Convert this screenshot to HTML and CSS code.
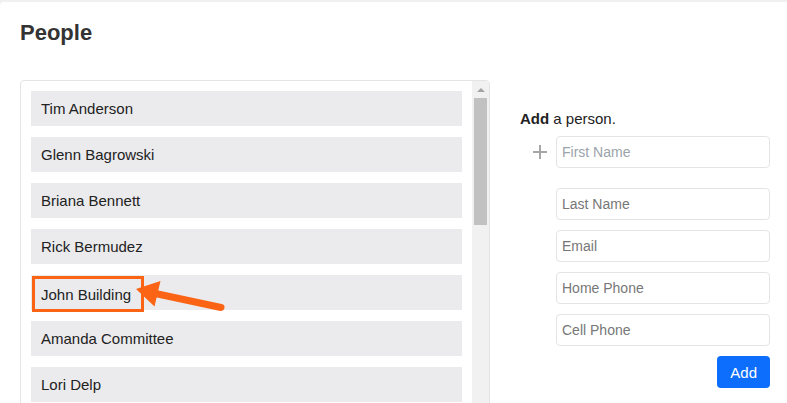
FILE: index.html
```html
<!DOCTYPE html>
<html lang="en">
<head>
    <meta charset="UTF-8">
    <meta name="viewport" content="width=device-width, initial-scale=1.0">
    <title>People</title>
    <link rel="stylesheet" href="styles.css">
</head>
<body>

<div class="page">
    <h1>People</h1>

    <div class="layout">
        <div class="panel">
            <ul class="people">
                <li class="person">Tim Anderson</li>
                <li class="person">Glenn Bagrowski</li>
                <li class="person">Briana Bennett</li>
                <li class="person">Rick Bermudez</li>
                <li class="person"><span class="marked">John Building</span></li>
                <li class="person">Amanda Committee</li>
                <li class="person">Lori Delp</li>
                <li class="person">Mark Dunn</li>
            </ul>
            <div class="scrollbar">
                <div class="scroll-up"></div>
                <div class="scroll-thumb"></div>
            </div>

            <!-- annotation arrow pointing at the marked row -->
            <svg class="arrow" width="100" height="40" viewBox="0 0 100 40">
                <line x1="22" y1="17" x2="90" y2="31.5" stroke="#fa6414" stroke-width="7" stroke-linecap="round"/>
                <polygon points="5,13 29.5,5 23.5,30.5" fill="#fa6414"/>
            </svg>
        </div>

        <form class="add-form" onsubmit="return false">
            <p class="add-title"><b>Add</b> a person.</p>
            <div class="row">
                <span class="plus">
                    <svg width="14" height="14" viewBox="0 0 14 14">
                        <path d="M7 0v14M0 7h14" stroke="#a6a6a6" stroke-width="2"/>
                    </svg>
                </span>
                <input type="text" class="first" placeholder="First Name">
            </div>
            <div class="fields">
                <input type="text" placeholder="Last Name">
                <input type="text" placeholder="Email">
                <input type="text" placeholder="Home Phone">
                <input type="text" placeholder="Cell Phone">
                <button type="submit">Add</button>
            </div>
        </form>
    </div>
</div>

</body>
</html>
```

FILE: styles.css
```css
html, body {
    margin: 0;
    height: 100%;
    overflow: hidden;
}
body {
    font-family: "Liberation Sans", Arial, sans-serif;
    background: #f0f0f0;
    padding-top: 2px;
    box-sizing: border-box;
}
.page {
    background: white;
    height: 100%;
    border-top-left-radius: 4px;
    padding: 18px 0 0 20px;
}
h1 {
    font-size: 22px;
    font-weight: bold;
    color: #333;
    margin: 0;
    line-height: normal;
}
.layout {
    display: flex;
    align-items: flex-start;
    margin-top: 34px;
}
.panel {
    position: relative;
    display: flex;
    flex: none;
    width: 470px;
    height: 340px;
    box-sizing: border-box;
    border: 1px solid #e4e4e4;
    border-radius: 4px;
    overflow: hidden;
}
.people {
    flex: 1;
    list-style: none;
    margin: 0;
    padding: 10px;
}
.person {
    height: 35px;
    line-height: 35px;
    padding: 0 10px;
    margin-bottom: 11px;
    background: #ebebed;
    color: #222;
    font-size: 15px;
}
.marked {
    display: inline-block;
    box-sizing: border-box;
    height: 36px;
    line-height: 31px;
    margin-left: -9px;
    margin-top: 1px;
    padding: 0 10px 0 6px;
    border: 3px solid #fa6414;
    vertical-align: top;
}
.scrollbar {
    width: 17px;
    background: #f1f1f1;
    display: flex;
    flex-direction: column;
    align-items: center;
}
.scroll-up {
    width: 0;
    height: 0;
    margin: 7px 0 6px;
    border-left: 4px solid transparent;
    border-right: 4px solid transparent;
    border-bottom: 4px solid #a3a3a3;
}
.scroll-thumb {
    width: 13px;
    height: 127px;
    background: #c1c1c1;
}
.arrow {
    position: absolute;
    left: 110px;
    top: 195px;
}
.add-form {
    flex: none;
    margin-left: 30px;
    padding-top: 30px;
    width: 250px;
}
.add-title {
    margin: 0 0 9px;
    font-size: 15px;
    line-height: 17px;
    color: #222;
}
.row {
    display: flex;
    align-items: center;
}
.plus {
    width: 36px;
    display: flex;
    justify-content: center;
    padding-left: 4px;
    box-sizing: border-box;
}
.plus svg {
    display: block;
}
input[type="text"] {
    width: 214px;
    height: 32px;
    box-sizing: border-box;
    border: 1px solid #e4e4e4;
    border-radius: 4px;
    padding: 0 5px;
    font-family: "Liberation Sans", Arial, sans-serif;
    font-size: 14px;
    color: #333;
    outline: none;
}
input::placeholder {
    color: #777;
}
input.first::placeholder {
    color: #9ba3ab;
}
.fields {
    margin-left: 36px;
    margin-top: 20px;
    display: flex;
    flex-direction: column;
    align-items: flex-end;
    gap: 10px;
}
button {
    height: 32px;
    padding: 0 13px;
    background-color: #0d6efd;
    color: white;
    border: none;
    border-radius: 4px;
    font-family: "Liberation Sans", Arial, sans-serif;
    font-size: 15px;
    cursor: pointer;
}
```
